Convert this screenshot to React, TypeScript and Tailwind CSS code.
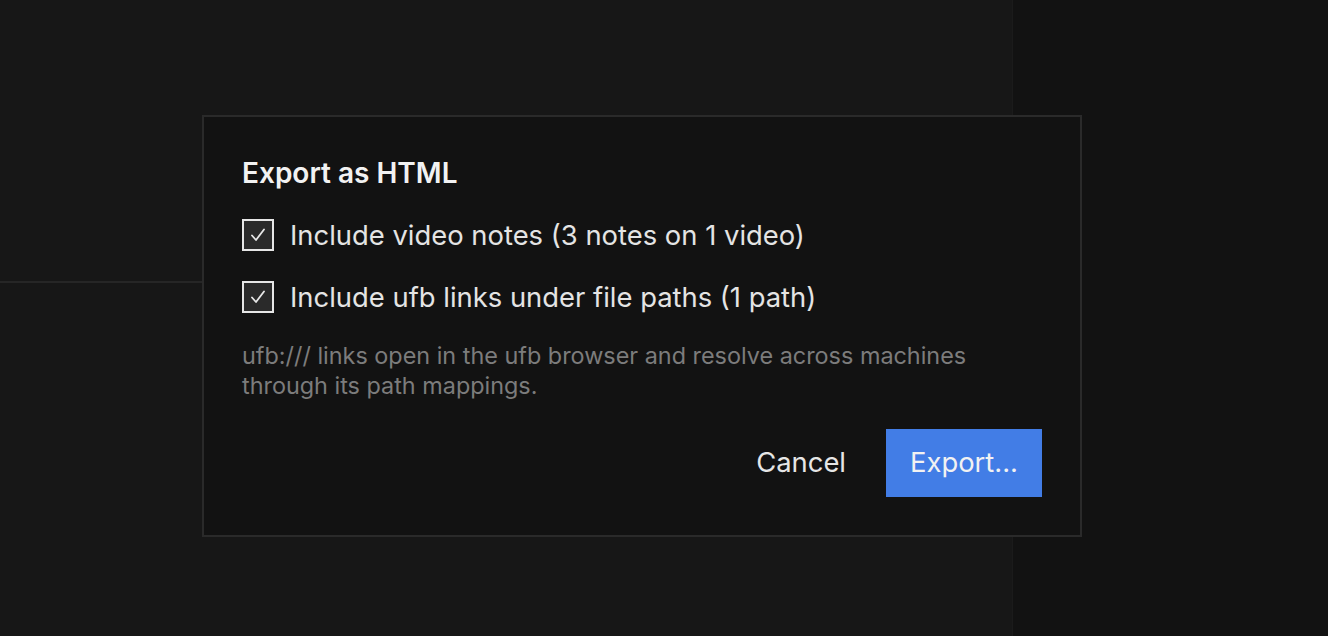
import React from "react";

const Check = () => (
  <span className="flex h-8 w-8 shrink-0 items-center justify-center border-2 border-[#e6e6e6] bg-[#2a2a2a]">
    <svg width="18" height="18" viewBox="0 0 18 18" fill="none">
      <path d="M3 9.5 L7 14 L15 3.5" stroke="#e8e8e8" strokeWidth="1.8" strokeLinecap="round" strokeLinejoin="round" />
    </svg>
  </span>
);

const Row = ({ label }: { label: string }) => (
  <label className="flex h-8 items-center gap-4">
    <Check />
    <span className="text-[27.4px] leading-8 text-[#e4e4e4]">{label}</span>
  </label>
);

export default function App() {
  return (
    <div
      className="relative flex h-[636px] w-[1328px] overflow-hidden bg-[#121212]"
      style={{ fontFamily: "Inter, 'Noto Sans', sans-serif" }}
    >
      <div className="flex w-[1013px] flex-col border-r border-[#1b1b1b] bg-[#171717]">
        <div className="h-[283px] border-b-2 border-[#262626]" />
        <div className="flex-1" />
      </div>
      <div className="flex-1 bg-[#121212]" />

      <div className="absolute left-[202px] top-[115px] w-[880px] border-2 border-[#2a2a2a] bg-[#121212] px-[38px] pt-10 pb-[38px]">
        <h2 className="text-[28px] font-semibold leading-8 text-[#f2f2f2]">Export as HTML</h2>
        <div className="mt-[30px] flex flex-col gap-[30px]">
          <Row label="Include video notes (3 notes on 1 video)" />
          <Row label="Include ufb links under file paths (1 path)" />
        </div>
        <p className="mt-7 text-[23.4px] leading-[30px] text-[#7c7c7c]">
          ufb:/// links open in the ufb browser and resolve across machines
          <br />
          through its path mappings.
        </p>
        <div className="mt-7 flex justify-end gap-4">
          <button className="h-[68px] px-6 text-[27.4px] text-[#e6e6e6]">Cancel</button>
          <button className="h-[68px] bg-[#427de6] px-6 text-[27.4px] text-[#f2f2f2]">Export...</button>
        </div>
      </div>
    </div>
  );
}
